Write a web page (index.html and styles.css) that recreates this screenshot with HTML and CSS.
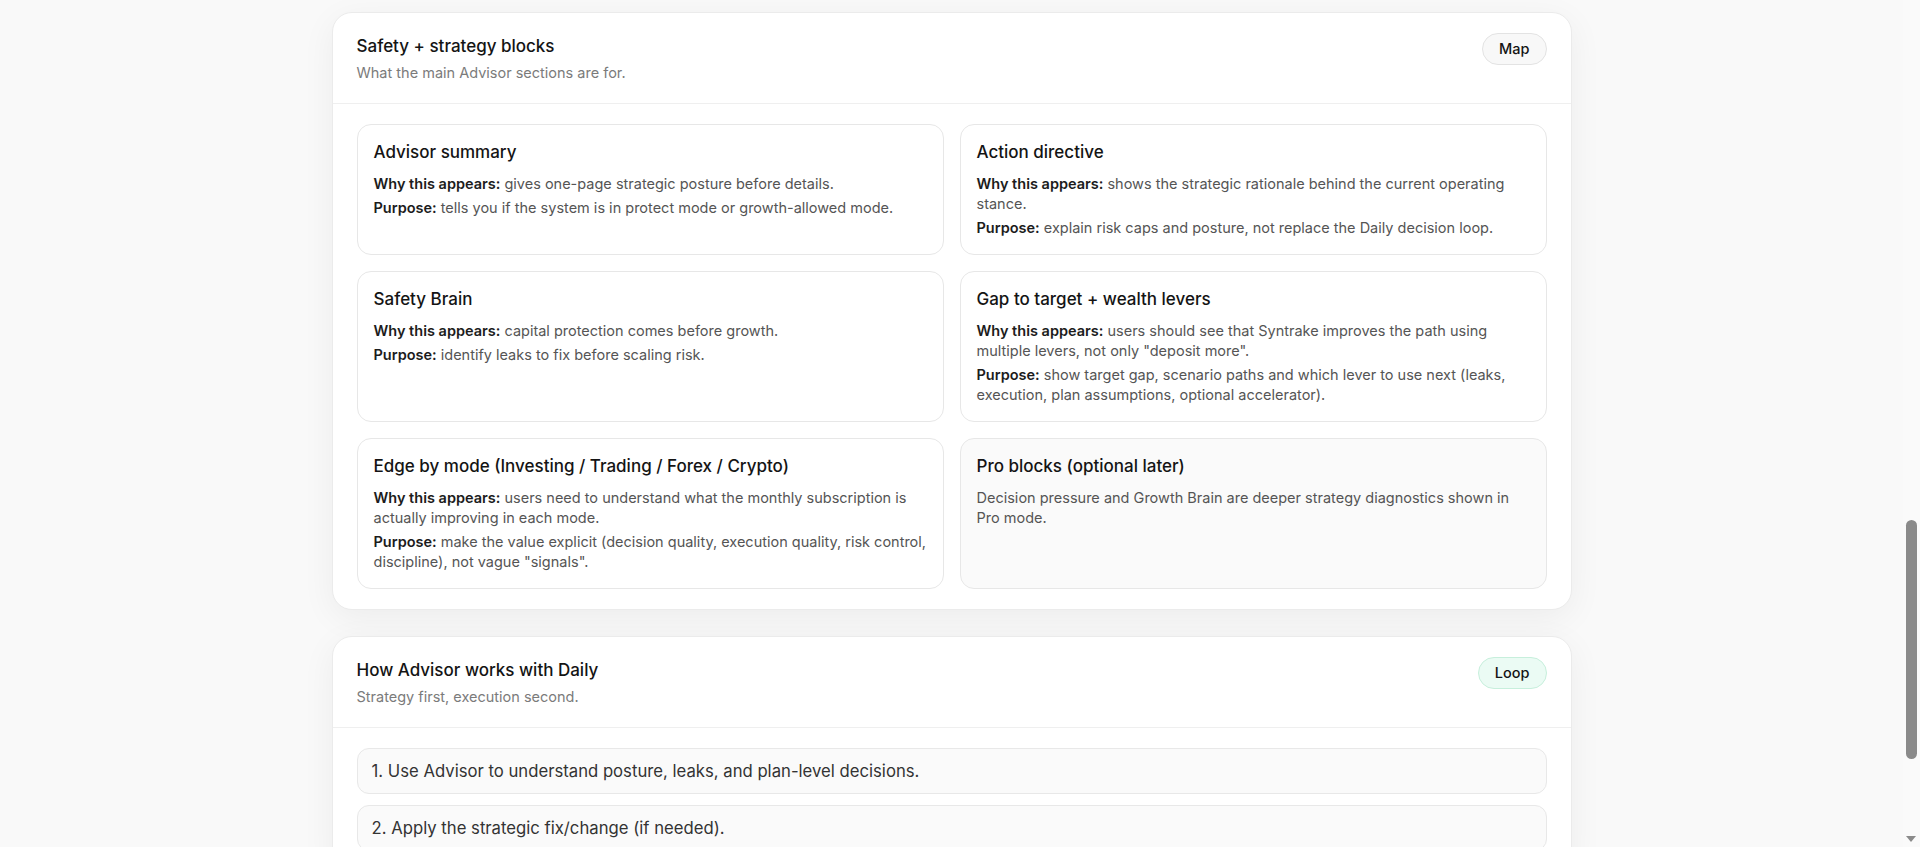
FILE: index.html
```html
<!DOCTYPE html>
<html lang="en">
<head>
<meta charset="utf-8">
<title>Advisor</title>
<link rel="stylesheet" href="styles.css">
</head>
<body>
<main class="page">
  <section class="panel">
    <header class="panel-head">
      <div class="head-text">
        <h2 class="panel-title">Safety + strategy blocks</h2>
        <p class="panel-sub">What the main Advisor sections are for.</p>
      </div>
      <span class="pill pill-gray">Map</span>
    </header>
    <div class="panel-body">
      <div class="block-grid">
        <article class="block">
          <h3 class="block-title">Advisor summary</h3>
          <p class="block-line"><b>Why this appears:</b> gives one-page strategic posture before details.</p>
          <p class="block-line"><b>Purpose:</b> tells you if the system is in protect mode or growth-allowed mode.</p>
        </article>
        <article class="block">
          <h3 class="block-title">Action directive</h3>
          <p class="block-line"><b>Why this appears:</b> shows the strategic rationale behind the current operating stance.</p>
          <p class="block-line"><b>Purpose:</b> explain risk caps and posture, not replace the Daily decision loop.</p>
        </article>
        <article class="block">
          <h3 class="block-title">Safety Brain</h3>
          <p class="block-line"><b>Why this appears:</b> capital protection comes before growth.</p>
          <p class="block-line"><b>Purpose:</b> identify leaks to fix before scaling risk.</p>
        </article>
        <article class="block">
          <h3 class="block-title">Gap to target + wealth levers</h3>
          <p class="block-line"><b>Why this appears:</b> users should see that Syntrake improves the path using multiple levers, not only "deposit more".</p>
          <p class="block-line"><b>Purpose:</b> show target gap, scenario paths and which lever to use next (leaks, execution, plan assumptions, optional accelerator).</p>
        </article>
        <article class="block">
          <h3 class="block-title">Edge by mode (Investing / Trading / Forex / Crypto)</h3>
          <p class="block-line"><b>Why this appears:</b> users need to understand what the monthly subscription is actually improving in each mode.</p>
          <p class="block-line"><b>Purpose:</b> make the value explicit (decision quality, execution quality, risk control, discipline), not vague "signals".</p>
        </article>
        <article class="block block-muted">
          <h3 class="block-title">Pro blocks (optional later)</h3>
          <p class="block-line">Decision pressure and Growth Brain are deeper strategy diagnostics shown in Pro mode.</p>
        </article>
      </div>
    </div>
  </section>

  <section class="panel">
    <header class="panel-head">
      <div class="head-text">
        <h2 class="panel-title">How Advisor works with Daily</h2>
        <p class="panel-sub">Strategy first, execution second.</p>
      </div>
      <span class="pill pill-green">Loop</span>
    </header>
    <div class="panel-body">
      <ol class="steps">
        <li class="step">1. Use Advisor to understand posture, leaks, and plan-level decisions.</li>
        <li class="step">2. Apply the strategic fix/change (if needed).</li>
      </ol>
    </div>
  </section>
</main>
<div class="fake-scrollbar" aria-hidden="true">
  <div class="fake-thumb"></div>
  <div class="fake-arrow"></div>
</div>
</body>
</html>
```

FILE: styles.css
```css
* { box-sizing: border-box; }

html, body {
  margin: 0;
  padding: 0;
}

body {
  background: #f9f9f9;
  font-family: Inter, "Noto Sans", "Liberation Sans", sans-serif;
  color: #111;
  padding-right: 17px;
  -webkit-font-smoothing: antialiased;
}

.page {
  width: 1240px;
  margin: 0 auto;
  padding: 12px 0 40px;
  display: flex;
  flex-direction: column;
  gap: 26px;
}

.panel {
  background: #fff;
  border: 1px solid #ebebeb;
  border-radius: 20px;
  box-shadow: 0 8px 34px rgba(0, 0, 0, 0.055);
}

.panel-head {
  display: flex;
  justify-content: space-between;
  align-items: flex-start;
  padding: 20px 24px 20px;
  border-bottom: 1px solid #efefef;
}

.panel-title {
  margin: 0;
  font-size: 17px;
  line-height: 26px;
  font-weight: 500;
  color: #141414;
}

.panel-sub {
  margin: 4px 0 0;
  font-size: 14.5px;
  line-height: 20px;
  color: #7b7b7b;
}

.pill {
  display: inline-block;
  height: 32px;
  padding: 0 16px;
  border-radius: 16px;
  font-size: 14.5px;
  line-height: 30px;
  font-weight: 500;
  color: #141414;
}

.pill-gray {
  background: #f8f8f8;
  border: 1px solid #e3e3e3;
}

.pill-green {
  background: #ebfbf4;
  border: 1px solid #c7efdc;
}

.panel-body {
  padding: 20px 24px 20px;
}

.block-grid {
  display: grid;
  grid-template-columns: 1fr 1fr;
  gap: 16px;
}

.block {
  border: 1px solid #e7e7e7;
  border-radius: 14px;
  padding: 16px 12px 16px 16px;
  background: #fff;
}

.block-muted {
  background: #fafafa;
}

.block-title {
  margin: 0 0 10px;
  font-size: 17px;
  line-height: 23px;
  font-weight: 500;
  color: #141414;
}

.block-line {
  margin: 0;
  font-size: 14.5px;
  line-height: 20px;
  color: #555;
}

.block-line + .block-line {
  margin-top: 4px;
}

.block-line b {
  font-weight: 600;
  color: #1c1c1c;
}

.steps {
  list-style: none;
  margin: 0;
  padding: 0;
  display: flex;
  flex-direction: column;
  gap: 11px;
}

.step {
  background: #fafafa;
  border: 1px solid #e8e8e8;
  border-radius: 12px;
  padding: 11px 14px;
  font-size: 16.7px;
  line-height: 22px;
  color: #333;
}

.fake-scrollbar {
  position: fixed;
  top: 0;
  right: 0;
  width: 17px;
  height: 847px;
  background: #fafafa;
}

.fake-thumb {
  position: absolute;
  left: 3px;
  top: 520px;
  width: 11px;
  height: 239px;
  border-radius: 6px;
  background: #8a8a8a;
}

.fake-arrow {
  position: absolute;
  left: 3px;
  bottom: 5px;
  width: 0;
  height: 0;
  border-left: 5.5px solid transparent;
  border-right: 5.5px solid transparent;
  border-top: 6px solid #8a8a8a;
}
```
